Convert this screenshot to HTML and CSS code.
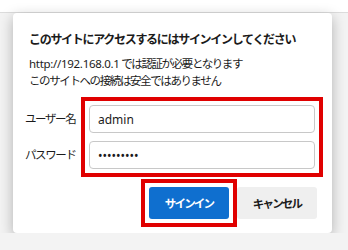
FILE: index.html
```html
<!DOCTYPE html>
<html lang="ja">
<head>
    <meta charset="UTF-8">
    <meta name="viewport" content="width=device-width, initial-scale=1.0">
    <title>サインイン</title>
    <link rel="stylesheet" href="styles.css">
</head>
<body>
    <div class="tabbar"></div>

    <div class="dialogo">
        <h1 class="titulo">このサイトにアクセスするにはサインインしてください</h1>
        <p class="texto"><span class="url">http://192.168.0.1</span> では認証が必要となります<br>このサイトへの接続は安全ではありません</p>

        <div class="campos">
            <div class="etiquetas">
                <label for="usuario">ユーザー名</label>
                <label for="clave">パスワード</label>
            </div>
            <div class="marca">
                <input type="text" id="usuario" value="admin">
                <input type="password" id="clave" value="123456789">
            </div>
        </div>

        <div class="botones">
            <div class="marca">
                <button class="primario">サインイン</button>
            </div>
            <button class="secundario">キャンセル</button>
        </div>
    </div>
</body>
</html>
```

FILE: styles.css
```css
body {
    margin: 0;
    background: #f3f3f3;
    font-family: "Noto Sans", "Noto Sans CJK JP", sans-serif;
    color: #1b1b1b;
}
.tabbar {
    height: 12px;
    background: #fff;
    border-bottom: 1px solid #dcdcdc;
}
.dialogo {
    width: 319px;
    height: 220px;
    box-sizing: border-box;
    margin-left: 13px;
    background: #fff;
    border-radius: 4px;
    box-shadow: 0 4px 14px rgba(0, 0, 0, 0.28);
    padding: 18px 9px 0 12px;
}
.titulo {
    margin: 0 0 0 4px;
    font-size: 12px;
    line-height: 18px;
    font-weight: bold;
    letter-spacing: -1.3px;
    white-space: nowrap;
}
.texto {
    margin: 6px 0 0 4px;
    font-size: 11.5px;
    line-height: 17px;
    letter-spacing: -1.4px;
    white-space: nowrap;
}
.url {
    letter-spacing: -0.3px;
}
.campos {
    display: flex;
    margin-top: 8px;
}
.etiquetas {
    width: 56px;
    flex-shrink: 0;
    display: flex;
    flex-direction: column;
    padding-top: 8px;
    gap: 8px;
}
.etiquetas label {
    height: 28px;
    line-height: 28px;
    font-size: 11.5px;
    letter-spacing: -1.4px;
    white-space: nowrap;
}
.marca {
    border: 4px solid #e00000;
    padding: 4px;
    display: flex;
    flex-direction: column;
    gap: 8px;
}
.campos .marca {
    width: 226px;
}
input {
    height: 28px;
    box-sizing: border-box;
    border: 1px solid #c8c8c8;
    border-radius: 4px;
    padding: 0 8px;
    font-family: inherit;
    font-size: 12px;
    color: #1b1b1b;
}
.botones {
    display: flex;
    justify-content: flex-end;
    align-items: center;
    margin-top: 2px;
    padding-right: 6px;
}
button {
    width: 80px;
    height: 32px;
    border: none;
    border-radius: 3px;
    font-family: inherit;
    font-size: 11.5px;
    font-weight: bold;
    letter-spacing: -1.8px;
    cursor: pointer;
}
.primario {
    background: #0f6fcf;
    color: #fff;
}
.secundario {
    background: #efefef;
    color: #1b1b1b;
}
```
